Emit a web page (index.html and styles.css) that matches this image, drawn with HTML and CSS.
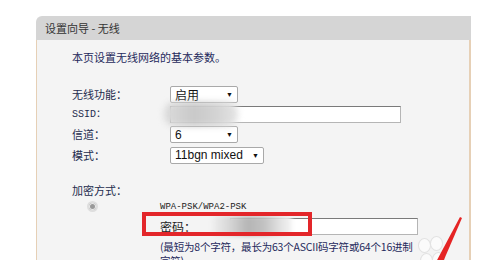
FILE: index.html
```html
<!DOCTYPE html>
<html lang="zh-CN">
<head>
  <meta charset="UTF-8">
  <title>设置向导 - 无线</title>
  <link rel="stylesheet" href="styles.css">
</head>
<body>

<div class="wizard">
  <div class="wizard-head">设置向导 - 无线</div>

  <div class="wizard-body">
    <p class="intro">本页设置无线网络的基本参数。</p>

    <div class="row">
      <label>无线功能：</label>
      <div class="select w68"><span>启用</span><i>▼</i></div>
    </div>
    <div class="row">
      <label class="latin">SSID：</label>
      <div class="field">
        <input type="text" class="ssid">
        <div class="smudge ssid-smudge"></div>
      </div>
    </div>
    <div class="row">
      <label>信道：</label>
      <div class="select w68"><span>6</span><i>▼</i></div>
    </div>
    <div class="row">
      <label>模式：</label>
      <div class="select w94"><span>11bgn mixed</span><i>▼</i></div>
    </div>

    <div class="section">加密方式：</div>

    <div class="radio-row">
      <span class="radio"></span>
      <span class="mode">WPA-PSK/WPA2-PSK</span>
    </div>

    <div class="pw-row">
      <label>密码：</label>
      <input type="text" class="pw">
      <div class="smudge pw-smudge"></div>
      <div class="mark"></div>
    </div>

    <p class="hint">(最短为8个字符，最长为63个ASCII码字符或64个16进制<br>字符)</p>
  </div>
</div>

<!-- decorations on top of the screenshot -->
<div class="paws">
  <span></span><span></span><span></span><span></span>
</div>
<svg class="arrow" width="40" height="50" viewBox="0 0 40 50">
  <polygon points="1,48 8,48 27,4 25,3" fill="#e52424"/>
</svg>

</body>
</html>
```

FILE: styles.css
```css
html, body {
  height: 260px;
  overflow: hidden;
}
body {
  margin: 0;
  background: #fff;
  font-family: "Noto Sans CJK SC", "Liberation Sans", sans-serif;
  font-size: 11px;
  color: #232b4d;
}
.wizard {
  margin: 16px 0 0 36px;
  width: 435px;
  height: 244px;
  overflow: hidden;
}
.wizard-head {
  height: 24px;
  line-height: 24px;
  padding-left: 9px;
  background: #d5d5d5;
  border-top-left-radius: 6px;
  color: #333;
}
.wizard-body {
  height: 220px;
  padding: 10px 0 0 35px;
  background: #f4f4f4;
  border-left: 1px solid #e6d0b6;
  border-right: 2px solid #e6d0b6;
}
.intro {
  margin: 0 0 20px;
  line-height: 14px;
  color: #1f2a5c;
}
.row {
  display: flex;
  align-items: center;
  height: 20px;
}
.row:nth-child(4) {
  height: 21px;
}
.row label {
  width: 98px;
  height: 17px;
  line-height: 17px;
}
.row label.latin {
  font-family: "Liberation Mono", monospace;
  font-size: 10px;
}
.select {
  display: flex;
  justify-content: space-between;
  align-items: center;
  box-sizing: border-box;
  height: 17px;
  padding: 0 4px 0 4px;
  background: #fff;
  border: 1px solid #a9a9a9;
  border-radius: 2px;
  font-family: "Liberation Sans", "Noto Sans CJK SC", sans-serif;
  font-size: 12px;
  color: #111;
}
.select i {
  font-style: normal;
  font-size: 7px;
  color: #111;
}
.w68 { width: 68px; }
.w94 { width: 94px; }
.field {
  position: relative;
  height: 17px;
}
input {
  box-sizing: border-box;
  margin: 0;
  height: 17px;
  padding: 0 3px;
  background: #fff;
  border: 1px solid #7a7a7a;
  border-right-color: #b5b5b5;
  border-bottom-color: #b5b5b5;
}
.ssid {
  width: 231px;
}
.smudge {
  position: absolute;
  border-radius: 10px;
  filter: blur(3px);
}
.ssid-smudge {
  left: -6px;
  top: -4px;
  width: 74px;
  height: 24px;
  background: linear-gradient(90deg, #dcdcdc, #c9c9c9 40%, #d3d3d3 70%, #e4e4e4);
}
.section {
  margin-top: 18px;
  height: 14px;
  line-height: 14px;
}
.radio-row {
  display: flex;
  align-items: center;
  height: 19px;
}
.radio {
  box-sizing: border-box;
  width: 11px;
  height: 11px;
  margin: 0 62px 0 15px;
  border: 2px solid #dedede;
  border-radius: 50%;
  background: #999;
  box-shadow: inset 0 0 0 1px #ececec;
}
.mode {
  font-family: "Liberation Mono", monospace;
  font-size: 9px;
  color: #222;
}
.pw-row {
  position: relative;
  display: flex;
  align-items: center;
  margin: 2px 0 0 88px;
  height: 17px;
}
.pw-row label {
  width: 70px;
  font-size: 12px;
  color: #222;
}
.pw {
  width: 188px;
}
.pw-smudge {
  left: 52px;
  top: -2px;
  width: 80px;
  height: 20px;
  border-radius: 4px;
  filter: blur(2px);
  background: linear-gradient(90deg, #eeeeee, #d9d9d9 20%, #b5b5b5 45%, #c2c2c2 65%, #e2e2e2 85%, #f4f4f4);
}
.mark {
  position: absolute;
  left: -18px;
  top: -6px;
  box-sizing: border-box;
  width: 170px;
  height: 24px;
  border: 4px solid #e3262a;
}
.hint {
  margin: 5px 0 0 88px;
  line-height: 14px;
  font-size: 10.5px;
  letter-spacing: -0.2px;
  color: #1f2a5c;
}
.paws {
  position: absolute;
  left: 418px;
  top: 236px;
  width: 30px;
  height: 24px;
}
.paws span {
  position: absolute;
  width: 11px;
  height: 13px;
  border: 1px solid #e2e2e2;
  border-radius: 50%;
  background: #fbfbfb;
}
.paws span:nth-child(1) { left: 0; top: 2px; }
.paws span:nth-child(2) { left: 12px; top: 0; }
.paws span:nth-child(3) { left: 2px; top: 17px; }
.paws span:nth-child(4) { left: 14px; top: 16px; }
.arrow {
  position: absolute;
  left: 435px;
  top: 214px;
}
```
